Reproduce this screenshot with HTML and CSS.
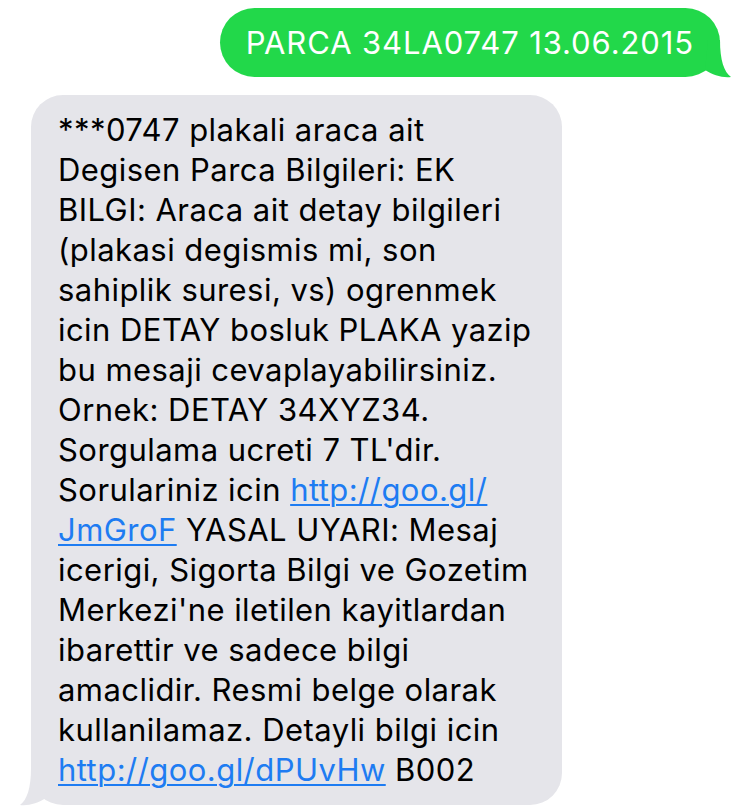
FILE: index.html
```html
<!DOCTYPE html>
<html lang="tr">
<head>
<meta charset="utf-8">
<link rel="stylesheet" href="styles.css">
</head>
<body>
<div class="thread">
  <div class="bubble sent">
    PARCA 34LA0747 13.06.2015
    <svg class="tail tail-right" width="32" height="38" viewBox="0 0 32 38"><path d="M8 0 L20 0 C20 20 24 32 31 37 C22 38 13 35 5 30 Z"/></svg>
  </div>
  <div class="bubble received">
    ***0747 plakali araca ait<br>
    Degisen Parca Bilgileri: EK<br>
    BILGI: Araca ait detay bilgileri<br>
    (plakasi degismis mi, son<br>
    sahiplik suresi, vs) ogrenmek<br>
    icin DETAY bosluk PLAKA yazip<br>
    bu mesaji cevaplayabilirsiniz.<br>
    Ornek: DETAY 34XYZ34.<br>
    Sorgulama ucreti 7 TL'dir.<br>
    Sorulariniz icin <a class="link" href="#">http://goo.gl/<br>JmGroF</a> YASAL UYARI: Mesaj<br>
    icerigi, Sigorta Bilgi ve Gozetim<br>
    Merkezi'ne iletilen kayitlardan<br>
    ibarettir ve sadece bilgi<br>
    amaclidir. Resmi belge olarak<br>
    kullanilamaz. Detayli bilgi icin<br>
    <a class="link" href="#">http://goo.gl/dPUvHw</a> B002
    <svg class="tail tail-left" width="32" height="38" viewBox="0 0 32 38"><path d="M24 0 L12 0 C12 20 8 32 1 37 C10 38 19 35 27 30 Z"/></svg>
  </div>
</div>
</body>
</html>
```

FILE: styles.css
```css
html, body {
  margin: 0;
  padding: 0;
  background: #ffffff;
}

.thread {
  width: 750px;
  height: 810px;
  padding-top: 8px;
  box-sizing: border-box;
  display: flex;
  flex-direction: column;
  font-family: Inter, "Noto Sans", sans-serif;
  overflow: hidden;
}

.bubble {
  position: relative;
  font-size: 31px;
}

.sent {
  align-self: flex-end;
  margin-right: 30px;
  height: 69px;
  line-height: 69px;
  padding: 0 26px;
  border-radius: 35px;
  background: #22d84a;
  color: #ffffff;
  white-space: nowrap;
  letter-spacing: 0.9px;
}

.received {
  align-self: flex-start;
  margin-top: 18px;
  margin-left: 31px;
  width: 531px;
  box-sizing: border-box;
  padding: 15px 10px 15px 27px;
  line-height: 40px;
  border-radius: 32px;
  background: #e5e5ea;
  color: #000000;
  white-space: nowrap;
  letter-spacing: 0.45px;
}

.link {
  color: #1e7cf2;
  text-decoration: underline;
  text-decoration-thickness: 2px;
  text-underline-offset: 3px;
}

.tail {
  position: absolute;
  bottom: -1px;
}

.tail-right {
  right: -12px;
  fill: #22d84a;
}

.tail-left {
  left: -12px;
  fill: #e5e5ea;
}
```
